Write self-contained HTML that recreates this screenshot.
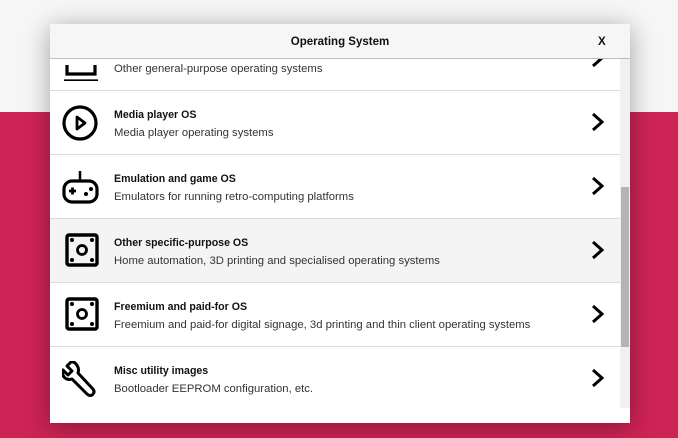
<!DOCTYPE html>
<html><head><style>
*{margin:0;padding:0;box-sizing:border-box}
body{width:678px;height:438px;overflow:hidden;position:relative;font-family:"Liberation Sans",sans-serif;background:#cd2355}
.top{position:absolute;left:0;top:0;width:678px;height:112px;background:#f6f6f6}
.dlg{position:absolute;left:50px;top:24px;width:580px;height:399px;background:#fff;box-shadow:0 4px 24px rgba(0,0,0,.35);overflow:hidden}
.hdr{position:absolute;left:0;top:0;width:580px;height:35px;background:#f6f6f6;border-bottom:1px solid #bdbdbd;z-index:2;font-size:11.5px;font-weight:bold;color:#111}
.hdr .t{position:absolute;left:0;width:580px;top:12px;text-align:center}
.hdr .x{position:absolute;left:548px;top:12px}
.row{position:absolute;left:0;width:570px;height:64px;border-bottom:1px solid #dcdcdc}
.row .ti{position:absolute;left:64px;top:18px;font-size:10.6px;font-weight:bold;color:#111}
.row .de{position:absolute;left:64px;top:36px;font-size:11.3px;color:#333}
.row svg.ic{position:absolute;left:12px;top:14px}
.row svg.ch{position:absolute;left:539px;top:20px}
.sb{position:absolute;left:570px;top:35px;width:10px;height:349px;background:#f0f0f0}
.th{position:absolute;left:571px;top:163px;width:8px;height:160px;background:#b4b4b4}
</style></head><body>
<div class="top"></div>
<div class="dlg">
<div class="hdr"><span class="t">Operating System</span><span class="x">X</span></div>
<div class="row" style="top:3px">
<svg class="ic" width="40" height="40" viewBox="0 0 40 40"><path d="M5 24 V33 H33 V24" fill="none" stroke="#000" stroke-width="3.2"/><path d="M2 40 H36" stroke="#000" stroke-width="3.2"/></svg>
<div class="de">Other general-purpose operating systems</div>
<svg class="ch" width="18" height="22" viewBox="0 0 18 22"><path d="M4 3 L13 11 L4 19" fill="none" stroke="#000" stroke-width="3"/></svg></div>
<div class="row" style="top:67px">
<svg class="ic" width="40" height="40" viewBox="0 0 40 40"><circle cx="18" cy="18" r="16" fill="none" stroke="#000" stroke-width="3.2"/><path d="M15 12 L23 18 L15 24 Z" fill="none" stroke="#000" stroke-width="2.8" stroke-linejoin="round"/></svg>
<div class="ti">Media player OS</div><div class="de">Media player operating systems</div>
<svg class="ch" width="18" height="22" viewBox="0 0 18 22"><path d="M4 3 L13 11 L4 19" fill="none" stroke="#000" stroke-width="3"/></svg></div>
<div class="row" style="top:131px">
<svg class="ic" width="40" height="40" viewBox="0 0 40 40"><path d="M18 2 V12" stroke="#000" stroke-width="2.5"/><rect x="2" y="12" width="33" height="21" rx="8" fill="none" stroke="#000" stroke-width="3.2"/><path d="M7 22 H14 M10.5 18.5 V25.5" stroke="#000" stroke-width="2.8"/><circle cx="24" cy="25" r="2"/><circle cx="29" cy="20" r="2"/></svg>
<div class="ti">Emulation and game OS</div><div class="de">Emulators for running retro-computing platforms</div>
<svg class="ch" width="18" height="22" viewBox="0 0 18 22"><path d="M4 3 L13 11 L4 19" fill="none" stroke="#000" stroke-width="3"/></svg></div>
<div class="row" style="top:195px;background:#f4f4f4">
<svg class="ic" width="40" height="40" viewBox="0 0 40 40"><rect x="5" y="2" width="30" height="30" rx="2" fill="none" stroke="#000" stroke-width="3.4"/><circle cx="20" cy="17" r="4.5" fill="none" stroke="#000" stroke-width="2.8"/><circle cx="10" cy="7" r="2"/><circle cx="30" cy="7" r="2"/><circle cx="10" cy="27" r="2"/><circle cx="30" cy="27" r="2"/></svg>
<div class="ti">Other specific-purpose OS</div><div class="de">Home automation, 3D printing and specialised operating systems</div>
<svg class="ch" width="18" height="22" viewBox="0 0 18 22"><path d="M4 3 L13 11 L4 19" fill="none" stroke="#000" stroke-width="3"/></svg></div>
<div class="row" style="top:259px">
<svg class="ic" width="40" height="40" viewBox="0 0 40 40"><rect x="5" y="2" width="30" height="30" rx="2" fill="none" stroke="#000" stroke-width="3.4"/><circle cx="20" cy="17" r="4.5" fill="none" stroke="#000" stroke-width="2.8"/><circle cx="10" cy="7" r="2"/><circle cx="30" cy="7" r="2"/><circle cx="10" cy="27" r="2"/><circle cx="30" cy="27" r="2"/></svg>
<div class="ti">Freemium and paid-for OS</div><div class="de">Freemium and paid-for digital signage, 3d printing and thin client operating systems</div>
<svg class="ch" width="18" height="22" viewBox="0 0 18 22"><path d="M4 3 L13 11 L4 19" fill="none" stroke="#000" stroke-width="3"/></svg></div>
<div class="row" style="top:323px;border-bottom:none">
<svg class="ic" width="40" height="40" viewBox="0 0 40 40"><path d="M9 1 L5 5 L10 10 L6 14 L1 9 C-1 15 4 20 10 18 L25 33 C27 35 30 35 31 33 C33 31 32 29 30 27 L16 12 C18 6 13 0 9 1 Z" fill="none" stroke="#000" stroke-width="3" stroke-linejoin="round"/></svg>
<div class="ti">Misc utility images</div><div class="de">Bootloader EEPROM configuration, etc.</div>
<svg class="ch" width="18" height="22" viewBox="0 0 18 22"><path d="M4 3 L13 11 L4 19" fill="none" stroke="#000" stroke-width="3"/></svg></div>
<div class="sb"></div><div class="th"></div>
</div>
</body></html>
